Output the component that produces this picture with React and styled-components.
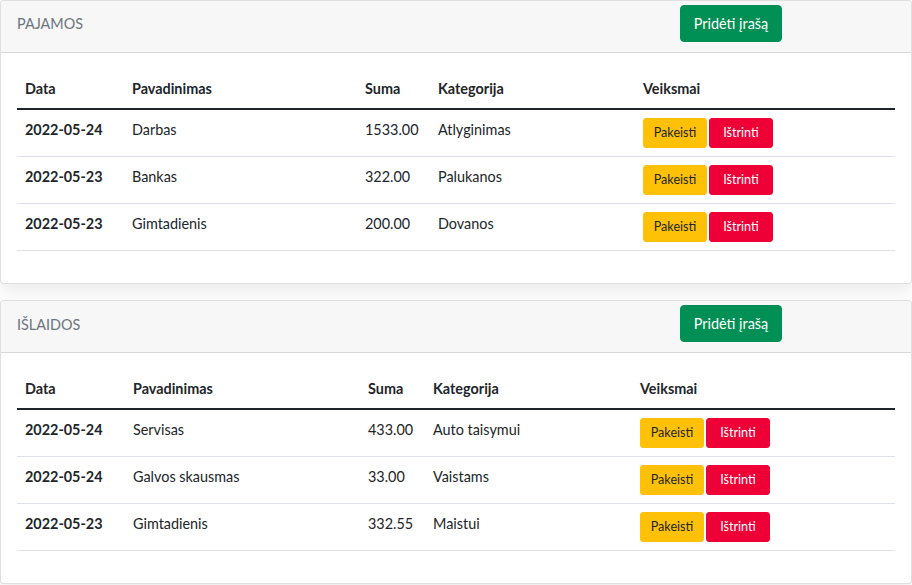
import React from "react";
import styled, {createGlobalStyle} from "styled-components";

const GlobalStyle = createGlobalStyle`
  html, body {
    margin: 0;
    padding: 0;
    background: #fff;
  }
  body {
    font-family: Lato, "Noto Sans", "Liberation Sans", sans-serif;
    font-size: 14.4px;
    line-height: 1.6;
    color: #212529;
  }
  * { box-sizing: border-box; }
`;

const Page = styled.div`
  width: 912px;
`;

const Card = styled.section`
  background: #fff;
  border: 1px solid rgba(0, 0, 0, 0.125);
  border-radius: 4px;
  box-shadow: 0 8px 16px rgba(0, 0, 0, 0.08);
  margin-bottom: 16px;
  overflow: hidden;
`;

const CardHeader = styled.header`
  display: grid;
  grid-template-columns: 663px auto;
  align-items: center;
  height: 52px;
  padding: 0 16px;
  background: #f7f7f7;
  border-bottom: 1px solid rgba(0, 0, 0, 0.125);
`;

const Title = styled.h2`
  margin: -5px 0 0;
  font-size: 14.4px;
  font-weight: 400;
  color: #6c757d;
  text-transform: uppercase;
`;

const AddButton = styled.button`
  justify-self: start;
  margin-top: -6px;
  font: inherit;
  color: #fff;
  background: #008f55;
  border: 1px solid #008f55;
  border-radius: 4px;
  padding: 6px 12px;
  width: 102px;
  height: 37px;
  cursor: pointer;
`;

const CardBody = styled.div`
  padding: 16px;
`;

const Table = styled.table`
  width: 100%;
  border-collapse: collapse;
  table-layout: fixed;
  margin-bottom: 16px;
`;

const Th = styled.th`
  text-align: left;
  font-weight: 700;
  padding: 8px;
  border-bottom: 2px solid #212529;
  vertical-align: bottom;
`;

const Td = styled.td`
  padding: 8px;
  vertical-align: top;
  border-bottom: 1px solid #dee2e6;
  font-weight: ${props => (props.strong ? 700 : 400)};
  white-space: nowrap;
`;

const Actions = styled.div`
  display: flex;
  gap: 2px;
`;

const SmallBtn = styled.button`
  font: inherit;
  font-size: 12.6px;
  line-height: 1.5;
  padding: 0 8px;
  width: 64px;
  height: 30px;
  border-radius: 3px;
  border: 1px solid ${props => (props.danger ? "#ee0036" : "#ffc107")};
  background: ${props => (props.danger ? "#ee0036" : "#ffc107")};
  color: ${props => (props.danger ? "#fff" : "#212529")};
  cursor: pointer;
`;

const sections = [
  {
    title: "Pajamos",
    cols: [107, 233, 73, 205],
    rows: [
      ["2022-05-24", "Darbas", "1533.00", "Atlyginimas"],
      ["2022-05-23", "Bankas", "322.00", "Palukanos"],
      ["2022-05-23", "Gimtadienis", "200.00", "Dovanos"],
    ],
  },
  {
    title: "Išlaidos",
    cols: [108, 235, 65, 207],
    rows: [
      ["2022-05-24", "Servisas", "433.00", "Auto taisymui"],
      ["2022-05-24", "Galvos skausmas", "33.00", "Vaistams"],
      ["2022-05-23", "Gimtadienis", "332.55", "Maistui"],
    ],
  },
];

function RecordCard({section}) {
  return (
    <Card>
      <CardHeader>
        <Title>{section.title}</Title>
        <AddButton>Pridėti įrašą</AddButton>
      </CardHeader>
      <CardBody>
        <Table>
          <colgroup>
            {section.cols.map((w, i) => (
              <col key={i} style={{width: w}} />
            ))}
            <col />
          </colgroup>
          <thead>
            <tr>
              <Th>Data</Th>
              <Th>Pavadinimas</Th>
              <Th>Suma</Th>
              <Th>Kategorija</Th>
              <Th>Veiksmai</Th>
            </tr>
          </thead>
          <tbody>
            {section.rows.map((row, i) => (
              <tr key={i}>
                <Td strong>{row[0]}</Td>
                <Td>{row[1]}</Td>
                <Td>{row[2]}</Td>
                <Td>{row[3]}</Td>
                <Td>
                  <Actions>
                    <SmallBtn>Pakeisti</SmallBtn>
                    <SmallBtn danger>Ištrinti</SmallBtn>
                  </Actions>
                </Td>
              </tr>
            ))}
          </tbody>
        </Table>
      </CardBody>
    </Card>
  );
}

export default function App() {
  return (
    <Page>
      <GlobalStyle />
      {sections.map(s => (
        <RecordCard key={s.title} section={s} />
      ))}
    </Page>
  );
}
